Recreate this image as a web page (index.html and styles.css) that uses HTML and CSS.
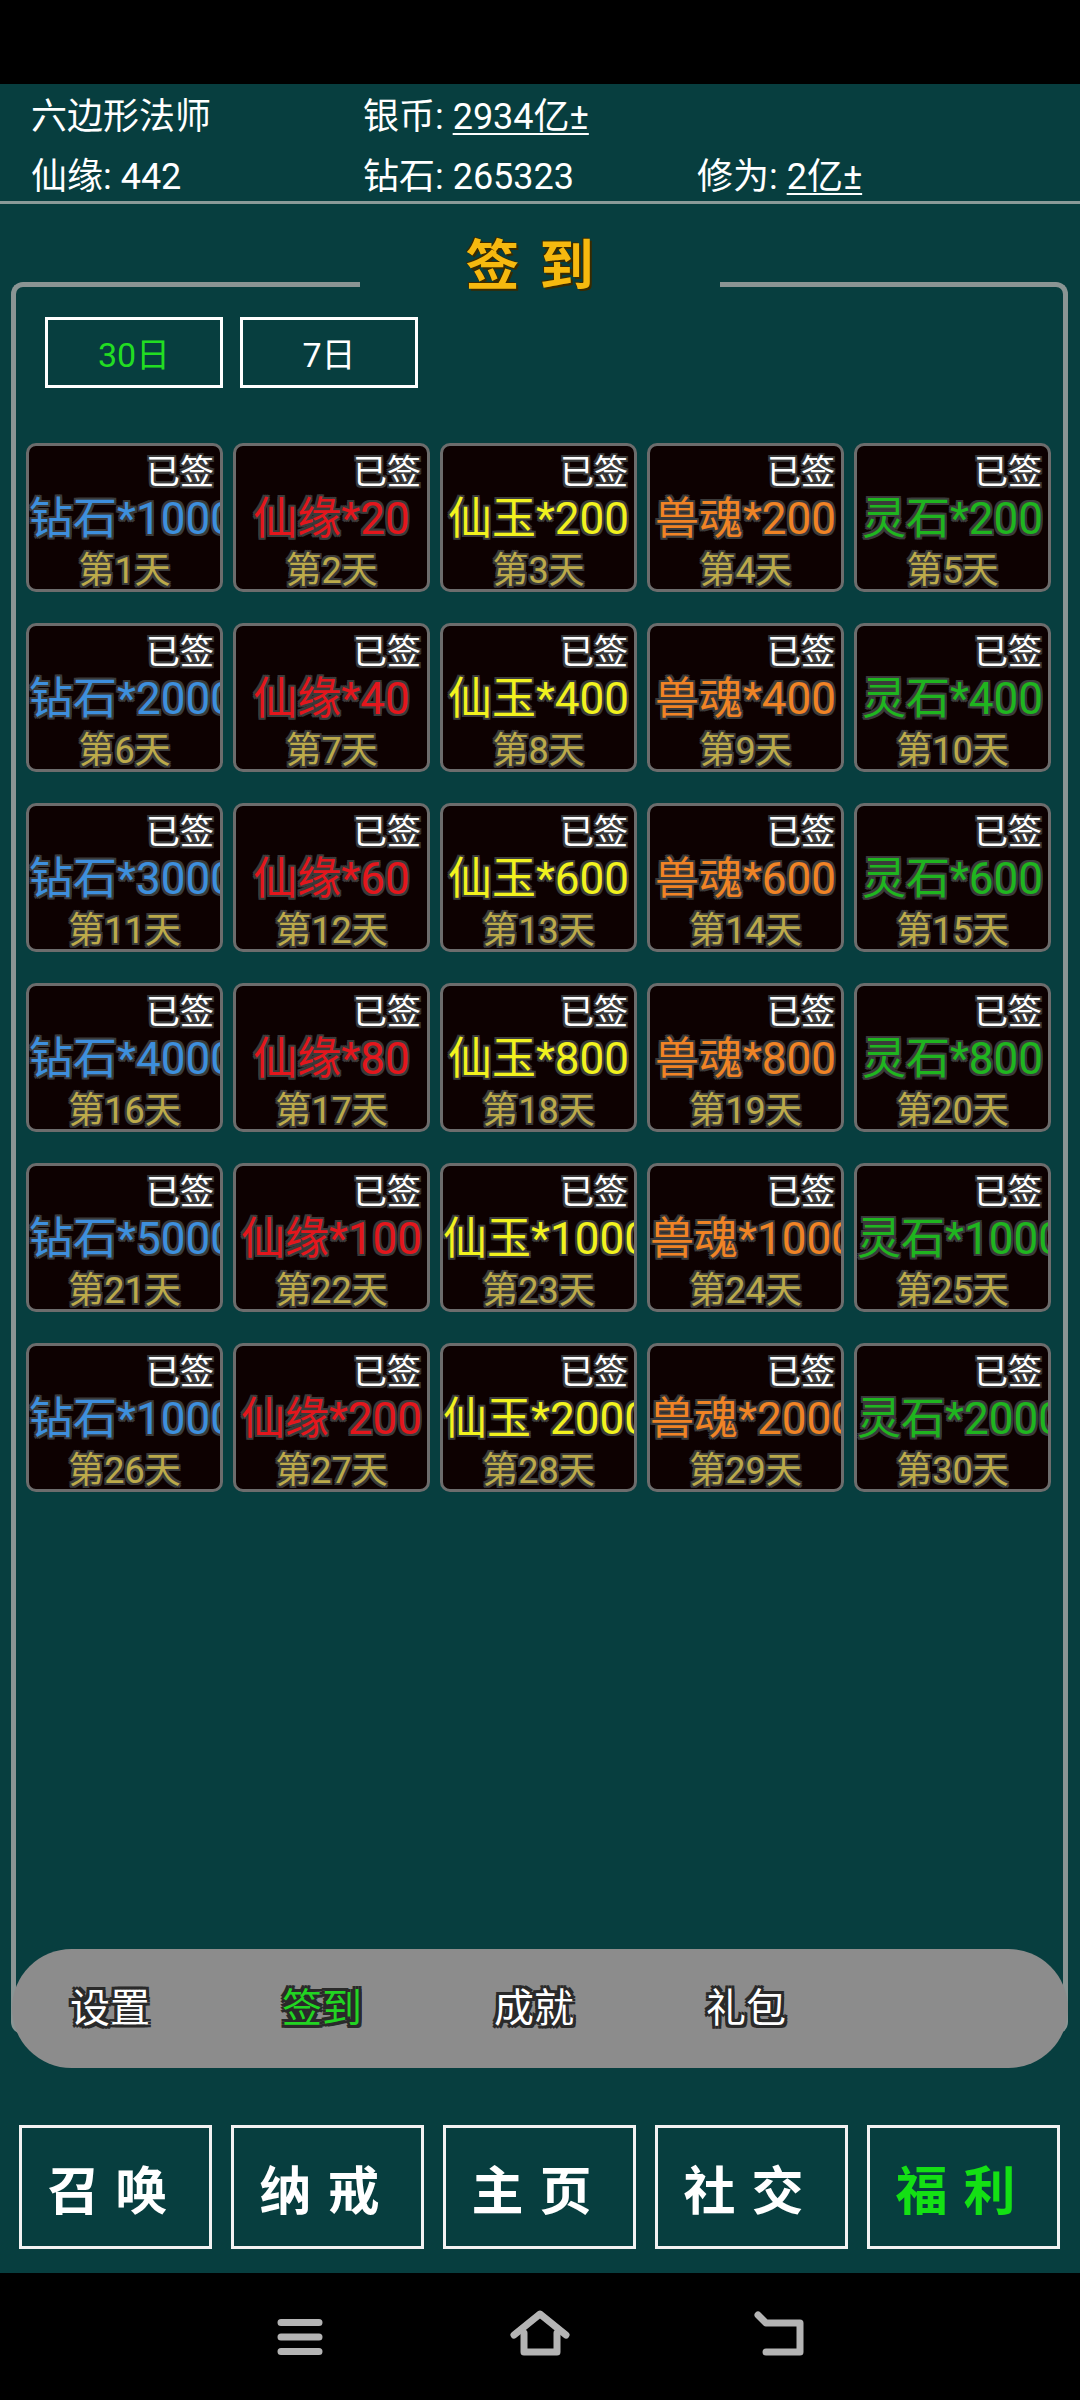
FILE: index.html
```html
<!DOCTYPE html>
<html lang="zh-CN">
<head>
    <meta charset="UTF-8">
    <meta name="viewport" content="width=device-width, initial-scale=1.0">
    <title>签到</title>
    <link rel="stylesheet" href="styles.css">
</head>
<body>
    <div class="status-bar"></div>

    <header class="stats">
        <span>六边形法师</span>
        <span>银币: <u>2934亿±</u></span>
        <span></span>
        <span>仙缘: 442</span>
        <span>钻石: 265323</span>
        <span>修为: <u>2亿±</u></span>
    </header>

    <section class="panel">
        <div class="panel-head">
            <i class="edge edge-left"></i>
            <h1 class="panel-title">签到</h1>
            <i class="edge edge-right"></i>
        </div>
        <div class="panel-body">
            <div class="range-tabs">
                <button class="range active">30日</button>
                <button class="range">7日</button>
            </div>

            <div class="sign-grid">
                <div class="day-card"><div class="signed">已签</div><div class="reward diamond">钻石*1000</div><div class="day">第1天</div></div>
                <div class="day-card"><div class="signed">已签</div><div class="reward fate">仙缘*20</div><div class="day">第2天</div></div>
                <div class="day-card"><div class="signed">已签</div><div class="reward jade">仙玉*200</div><div class="day">第3天</div></div>
                <div class="day-card"><div class="signed">已签</div><div class="reward soul">兽魂*200</div><div class="day">第4天</div></div>
                <div class="day-card"><div class="signed">已签</div><div class="reward stone">灵石*200</div><div class="day">第5天</div></div>

                <div class="day-card"><div class="signed">已签</div><div class="reward diamond">钻石*2000</div><div class="day">第6天</div></div>
                <div class="day-card"><div class="signed">已签</div><div class="reward fate">仙缘*40</div><div class="day">第7天</div></div>
                <div class="day-card"><div class="signed">已签</div><div class="reward jade">仙玉*400</div><div class="day">第8天</div></div>
                <div class="day-card"><div class="signed">已签</div><div class="reward soul">兽魂*400</div><div class="day">第9天</div></div>
                <div class="day-card"><div class="signed">已签</div><div class="reward stone">灵石*400</div><div class="day">第10天</div></div>

                <div class="day-card"><div class="signed">已签</div><div class="reward diamond">钻石*3000</div><div class="day">第11天</div></div>
                <div class="day-card"><div class="signed">已签</div><div class="reward fate">仙缘*60</div><div class="day">第12天</div></div>
                <div class="day-card"><div class="signed">已签</div><div class="reward jade">仙玉*600</div><div class="day">第13天</div></div>
                <div class="day-card"><div class="signed">已签</div><div class="reward soul">兽魂*600</div><div class="day">第14天</div></div>
                <div class="day-card"><div class="signed">已签</div><div class="reward stone">灵石*600</div><div class="day">第15天</div></div>

                <div class="day-card"><div class="signed">已签</div><div class="reward diamond">钻石*4000</div><div class="day">第16天</div></div>
                <div class="day-card"><div class="signed">已签</div><div class="reward fate">仙缘*80</div><div class="day">第17天</div></div>
                <div class="day-card"><div class="signed">已签</div><div class="reward jade">仙玉*800</div><div class="day">第18天</div></div>
                <div class="day-card"><div class="signed">已签</div><div class="reward soul">兽魂*800</div><div class="day">第19天</div></div>
                <div class="day-card"><div class="signed">已签</div><div class="reward stone">灵石*800</div><div class="day">第20天</div></div>

                <div class="day-card"><div class="signed">已签</div><div class="reward diamond">钻石*5000</div><div class="day">第21天</div></div>
                <div class="day-card"><div class="signed">已签</div><div class="reward fate">仙缘*100</div><div class="day">第22天</div></div>
                <div class="day-card"><div class="signed">已签</div><div class="reward jade">仙玉*1000</div><div class="day">第23天</div></div>
                <div class="day-card"><div class="signed">已签</div><div class="reward soul">兽魂*1000</div><div class="day">第24天</div></div>
                <div class="day-card"><div class="signed">已签</div><div class="reward stone">灵石*1000</div><div class="day">第25天</div></div>

                <div class="day-card"><div class="signed">已签</div><div class="reward diamond">钻石*10000</div><div class="day">第26天</div></div>
                <div class="day-card"><div class="signed">已签</div><div class="reward fate">仙缘*200</div><div class="day">第27天</div></div>
                <div class="day-card"><div class="signed">已签</div><div class="reward jade">仙玉*2000</div><div class="day">第28天</div></div>
                <div class="day-card"><div class="signed">已签</div><div class="reward soul">兽魂*2000</div><div class="day">第29天</div></div>
                <div class="day-card"><div class="signed">已签</div><div class="reward stone">灵石*2000</div><div class="day">第30天</div></div>
            </div>
        </div>
    </section>

    <nav class="sub-tabs">
        <span class="sub-tab">设置</span>
        <span class="sub-tab active">签到</span>
        <span class="sub-tab">成就</span>
        <span class="sub-tab">礼包</span>
    </nav>

    <nav class="main-nav">
        <button class="nav-btn">召唤</button>
        <button class="nav-btn">纳戒</button>
        <button class="nav-btn">主页</button>
        <button class="nav-btn">社交</button>
        <button class="nav-btn active">福利</button>
    </nav>

    <div class="system-bar">
        <!-- menu -->
        <svg class="sys-icon" width="72" height="60" viewBox="0 0 72 60">
            <path d="M17 18.5H55M17 33H55M17 47.5H55" />
        </svg>
        <!-- home -->
        <svg class="sys-icon" width="72" height="60" viewBox="0 0 72 60">
            <path d="M10 31L36 10L62 31" />
            <path d="M20 29V48H53V29" />
        </svg>
        <!-- back -->
        <svg class="sys-icon" width="72" height="60" viewBox="0 0 72 60">
            <path d="M14 11L22 19H56V48H22" />
        </svg>
    </div>
</body>
</html>
```

FILE: styles.css
```css
* {
    box-sizing: border-box;
}

body {
    margin: 0;
    min-height: 100vh;
    display: flex;
    flex-direction: column;
    background: #073e3f;
    color: #fff;
    font-family: 'Roboto', 'Noto Sans CJK SC', sans-serif;
}

button {
    font-family: inherit;
    background: none;
    cursor: pointer;
}

.status-bar {
    height: 84px;
    background: #000;
}

/* player stats */
.stats {
    display: grid;
    grid-template-columns: 332px 334px 1fr;
    row-gap: 14px;
    padding: 10px 0 1px 31px;
    font-size: 36px;
    line-height: 46px;
    border-bottom: 3px solid #8a9a98;
}

.stats u {
    text-decoration-thickness: 2px;
    text-underline-offset: 4px;
}

/* sign-in panel */
.panel {
    flex: 1;
    display: flex;
    flex-direction: column;
    margin: 0 12px 0 11px;
}

.panel-head {
    display: flex;
    height: 91px;
}

.edge {
    flex: 1;
    margin-top: 78px;
    border-top: 5px solid #8a9594;
}

.edge-left {
    border-left: 5px solid #8a9594;
    border-top-left-radius: 12px;
}

.edge-right {
    border-right: 5px solid #8a9594;
    border-top-right-radius: 12px;
}

.panel-title {
    width: 360px;
    margin: 34px 0 0;
    text-align: center;
    font-size: 54px;
    line-height: 57px;
    font-weight: 700;
    letter-spacing: 20px;
    color: #f6b90f;
    text-shadow: 2px 2px 0 #3a2a00, -1px -1px 0 #3a2a00;
}

.panel-body {
    flex: 1;
    border: 5px solid #8a9594;
    border-top: 0;
    border-radius: 0 0 12px 12px;
    padding: 22px 0 0;
}

.range-tabs {
    display: flex;
    gap: 17px;
    padding-left: 29px;
}

.range {
    width: 178px;
    height: 71px;
    border: 3px solid #fff;
    color: #fff;
    font-size: 34px;
}

.range.active {
    color: #22dd22;
}

.sign-grid {
    display: grid;
    grid-template-columns: repeat(5, 197px);
    column-gap: 10px;
    row-gap: 31px;
    margin-top: 55px;
    padding-left: 10px;
}

.day-card {
    height: 149px;
    padding-top: 4px;
    border: 3px solid #6c6c6c;
    border-radius: 10px;
    background: #0d0101;
    overflow: hidden;
    white-space: nowrap;
    text-align: center;
    text-shadow: -2px -2px 0 #3a3a3a, 2px -2px 0 #3a3a3a, -2px 2px 0 #3a3a3a, 2px 2px 0 #3a3a3a,
        0 -2px 0 #3a3a3a, 0 2px 0 #3a3a3a, -2px 0 0 #3a3a3a, 2px 0 0 #3a3a3a;
}

.signed {
    text-align: right;
    padding-right: 6px;
    font-size: 34px;
    line-height: 44px;
    color: #fff;
}

.reward {
    font-size: 44px;
    line-height: 50px;
}

.day {
    font-size: 36px;
    line-height: 54px;
    color: #bcaa4a;
}

.diamond { color: #3d8fdd; }
.fate { color: #e3161c; }
.jade { color: #f2f21e; }
.soul { color: #f08325; }
.stone { color: #1fb51f; }

/* panel switcher */
.sub-tabs {
    display: flex;
    align-items: center;
    gap: 132px;
    height: 119px;
    margin: -85px 12px 0;
    padding-left: 58px;
    border-radius: 60px;
    background: #8c8c8c;
}

.sub-tab {
    font-size: 40px;
    line-height: 1;
    color: #fff;
    text-shadow: -3px -3px 0 #2a2a2a, 3px -3px 0 #2a2a2a, -3px 3px 0 #2a2a2a, 3px 3px 0 #2a2a2a,
        0 -3px 0 #2a2a2a, 0 3px 0 #2a2a2a, -3px 0 0 #2a2a2a, 3px 0 0 #2a2a2a;
}

.sub-tab.active {
    color: #22d422;
}

/* main navigation */
.main-nav {
    display: flex;
    gap: 19px;
    padding: 57px 19px 24px;
}

.nav-btn {
    flex: 0 0 193px;
    height: 124px;
    border: 3px solid #f2f2f2;
    color: #fff;
    font-size: 52px;
    font-weight: 700;
    letter-spacing: 16px;
}

.nav-btn.active {
    color: #14e014;
}

.system-bar {
    height: 127px;
    display: flex;
    justify-content: center;
    align-items: center;
    gap: 168px;
    padding-bottom: 6px;
    background: #000;
}

.sys-icon path {
    fill: none;
    stroke: #b4b4b4;
    stroke-width: 7;
    stroke-linecap: round;
    stroke-linejoin: round;
}
```
